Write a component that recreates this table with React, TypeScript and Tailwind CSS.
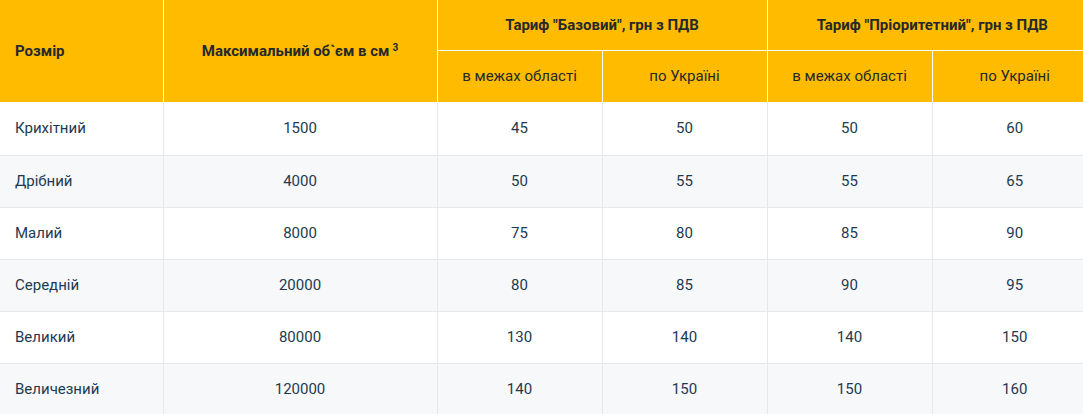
import React from "react";

const rows = [
  ["Крихітний", "1500", "45", "50", "50", "60"],
  ["Дрібний", "4000", "50", "55", "55", "65"],
  ["Малий", "8000", "75", "80", "85", "90"],
  ["Середній", "20000", "80", "85", "90", "95"],
  ["Великий", "80000", "130", "140", "140", "150"],
  ["Величезний", "120000", "140", "150", "150", "160"],
];

export default function App() {
  return (
    <div className="w-[1083px] h-[414px] overflow-hidden bg-white" style={{ fontFamily: "Roboto, 'Noto Sans', sans-serif" }}>
      <table className="border-collapse table-fixed w-[1097px] text-[15px]">
        <colgroup>
          <col className="w-[163px]" />
          <col className="w-[274px]" />
          <col className="w-[165px]" />
          <col className="w-[165px]" />
          <col className="w-[165px]" />
          <col className="w-[165px]" />
        </colgroup>
        <thead className="bg-[#ffbb00] text-[#26292b]">
          <tr className="h-[50px]">
            <th rowSpan={2} className="text-left pl-[15px] font-bold border-r border-white">Розмір</th>
            <th rowSpan={2} className="text-center font-bold border-r border-white">
              Максимальний об`єм в см<span className="text-[10px] ml-[3px] relative top-[-5px]">3</span>
            </th>
            <th colSpan={2} className="text-center font-bold border-r border-b border-white">Тариф "Базовий", грн з ПДВ</th>
            <th colSpan={2} className="text-center font-bold border-b border-white">Тариф "Пріоритетний", грн з ПДВ</th>
          </tr>
          <tr className="h-[52px]">
            <th className="font-normal text-center border-r border-white">в межах області</th>
            <th className="font-normal text-center border-r border-white">по Україні</th>
            <th className="font-normal text-center border-r border-white">в межах області</th>
            <th className="font-normal text-center">по Україні</th>
          </tr>
        </thead>
        <tbody className="text-[#1d3a52]">
          {rows.map((r, i) => (
            <tr key={i} className={`${i === 0 ? "h-[53px]" : "h-[52px]"} border-b border-[#e6e8ea] ${i % 2 === 1 ? "bg-[#f7f8f9]" : "bg-white"}`}>
              {r.map((c, j) => (
                <td
                  key={j}
                  className={`${j === 0 ? "text-left pl-[15px]" : "text-center"} ${j < 5 ? "border-r border-[#e6e8ea]" : ""}`}
                >
                  {c}
                </td>
              ))}
            </tr>
          ))}
        </tbody>
      </table>
    </div>
  );
}
